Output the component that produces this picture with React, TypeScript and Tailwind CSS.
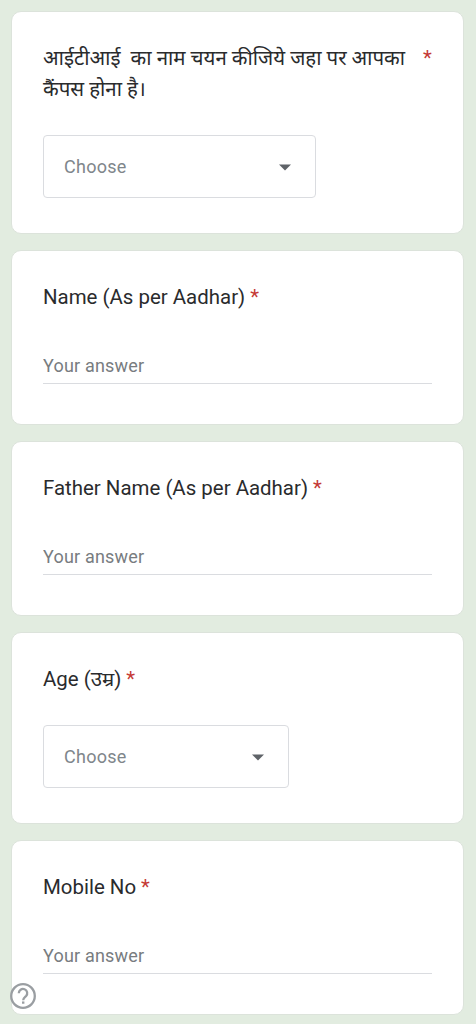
import { useState } from 'react';

type Question = {
  id: string;
  label: string;
  labelClass: string;
  kind: 'text' | 'select';
  cardClass: string;
  selectClass?: string;
};

const questions: Question[] = [
  {
    id: 'iti',
    label: 'आईटीआई\u00a0 का नाम चयन कीजिये जहा पर आपका कैंपस होना है।',
    labelClass: 'w-[366px]',
    kind: 'select',
    cardClass: 'h-[223px]',
    selectClass: 'w-[273px]',
  },
  { id: 'name', label: 'Name (As per Aadhar)', labelClass: '', kind: 'text', cardClass: 'h-[175px]' },
  { id: 'father', label: 'Father Name (As per Aadhar)', labelClass: '', kind: 'text', cardClass: 'h-[175px]' },
  { id: 'age', label: 'Age (उम्र)', labelClass: '', kind: 'select', cardClass: 'h-48', selectClass: 'w-[246px]' },
  { id: 'mobile', label: 'Mobile No', labelClass: '', kind: 'text', cardClass: 'h-[175px]' },
];

function SelectField({ className }: { className?: string }) {
  return (
    <button
      type="button"
      className={`mt-[30px] flex h-[63px] items-center justify-between rounded-[4px] border border-[#dadce0] pr-6 pl-5 text-[18px] tracking-[0.25px] text-[#80868b] ${className}`}
    >
      <span className="pb-px">Choose</span>
      <svg width="12" height="7" viewBox="0 0 12 7" className="mt-0.5">
        <path d="M0 0.5h12l-6 6z" fill="#5f6368" />
      </svg>
    </button>
  );
}

function TextField({ value, onChange }: { value: string; onChange: (value: string) => void }) {
  return (
    <input
      type="text"
      placeholder="Your answer"
      value={value}
      onChange={(e) => onChange(e.target.value)}
      className="mt-[34px] h-[37px] w-full border-b border-[#dadce0] text-[18px] tracking-[0.2px] outline-none placeholder:text-[#787c80]"
    />
  );
}

export default function App() {
  const [answers, setAnswers] = useState<Record<string, string>>({});

  return (
    <div className="relative h-screen overflow-hidden bg-[#e2ece0] pt-[11px] pr-[12px] pl-[11px] font-['Roboto','Noto_Sans',sans-serif] text-[#2a2b2d]">
      <form className="flex flex-col gap-4">
        {questions.map((q) => (
          <div
            key={q.id}
            className={`shrink-0 rounded-[10px] border border-[#dce3db] bg-white px-[31px] pt-[31px] ${q.cardClass}`}
          >
            <div className="flex text-[20.45px] leading-[31px]">
              <span className={`shrink-0 ${q.labelClass}`}>{q.label}</span>
              <span className={`text-[#c53a36] ${q.id === 'iti' ? 'ml-[14px]' : 'ml-[5px]'}`}>*</span>
            </div>
            {q.kind === 'select' ? (
              <SelectField className={q.selectClass} />
            ) : (
              <TextField
                value={answers[q.id] || ''}
                onChange={(value) => setAnswers({ ...answers, [q.id]: value })}
              />
            )}
          </div>
        ))}
      </form>

      {/* help */}
      <button type="button" aria-label="Help" className="absolute bottom-[14px] left-[9px]">
        <svg width="28" height="28" viewBox="0 0 28 28" fill="none" stroke="#9a9ea2" strokeWidth="2.3">
          <circle cx="14" cy="14" r="11.8" />
          <path d="M9.800 11.200a4.200 4.200 0 1 1 7.200 2.900c-1.500 1.400-2.800 2-2.800 4.200" />
          <path d="M13 20.600h2.400" />
        </svg>
      </button>
    </div>
  );
}
